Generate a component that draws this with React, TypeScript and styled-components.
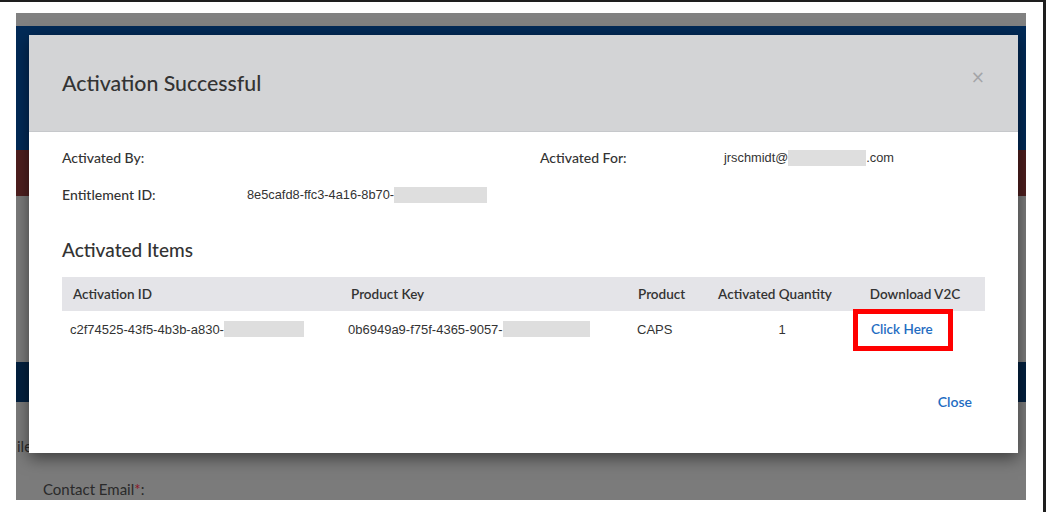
import React from "react";
import styled, { createGlobalStyle } from "styled-components";

const GlobalStyle = createGlobalStyle`
  html, body {
    margin: 0;
    padding: 0;
    background: #ffffff;
    width: 1046px;
    height: 512px;
    overflow: hidden;
  }
  body {
    font-family: "Source Sans Pro", Lato, "Noto Sans", sans-serif;
    color: #333;
  }
`;

const Frame = styled.div`
  width: 1046px;
  height: 512px;
  box-sizing: border-box;
  border-top: 2px solid #1e1e1e;
  border-right: 3px solid #1e1e1e;
  padding: 11px 17px 12px 16px;
`;

// the page behind the dialog, already dimmed by the backdrop
const Page = styled.div`
  position: relative;
  height: 487px;
  width: 1010px;
  overflow: hidden;
  background: #7b7b7b;
  display: flex;
  flex-direction: column;
`;

const Band = styled.div<{ $h: number; $bg: string }>`
  height: ${(p) => p.$h}px;
  flex: none;
  background: ${(p) => p.$bg};
`;

const Spacer = styled.div<{ $h: number }>`
  height: ${(p) => p.$h}px;
  flex: none;
`;

const PageText = styled.div<{ $left: number }>`
  margin-left: ${(p) => p.$left}px;
  font-family: "Source Sans Pro", Lato, sans-serif;
  font-size: 15px;
  color: #2a2a2a;
  line-height: 20px;
`;

const Req = styled.span`
  color: #8a1526;
`;

const Modal = styled.div`
  position: absolute;
  left: 13px;
  top: 22px;
  width: 989px;
  height: 418px;
  background: #fff;
  box-shadow: 0 5px 15px rgba(0, 0, 0, 0.5);
  display: flex;
  flex-direction: column;
`;

const Header = styled.div`
  height: 97px;
  box-sizing: border-box;
  background: #d3d4d6;
  border-bottom: 1px solid #c6c8cb;
  padding: 0 33px;
  display: flex;
  align-items: center;
  justify-content: space-between;
`;

const Title = styled.h4`
  margin: 0;
  font-size: 21.3px;
  font-weight: 500;
  color: #333;
`;

const CloseX = styled.button`
  background: none;
  border: none;
  padding: 0;
  margin-bottom: 11px;
  font-family: "DejaVu Sans", sans-serif;
  font-size: 17px;
  line-height: 1;
  color: #a4a5a8;
  cursor: pointer;
`;

const Body = styled.div`
  padding: 16px 33px 0;
  flex: 1;
`;

const InfoGrid = styled.div`
  display: grid;
  grid-template-columns: 185px 293px 184px 1fr;
  row-gap: 17px;
  line-height: 20px;
`;

const Label = styled.div`
  color: #333;
  font-size: 14px;
  font-weight: 500;
`;

const Value = styled.div`
  color: #333;
  font-family: "Liberation Sans", Arial, sans-serif;
  font-size: 12.8px;
  display: flex;
  align-items: center;
`;

const Redact = styled.span<{ $w: number }>`
  display: inline-block;
  width: ${(p) => p.$w}px;
  height: 16px;
  background: #dedede;
`;

const SectionTitle = styled.h5`
  margin: 33px 0 15px;
  font-size: 19px;
  font-weight: 500;
  line-height: 24px;
  color: #333;
`;

const Table = styled.table`
  width: 923px;
  border-collapse: collapse;
  table-layout: fixed;
`;

const Th = styled.th<{ $w: number; $align?: string; $pl?: number }>`
  box-sizing: border-box;
  width: ${(p) => p.$w}px;
  height: 34px;
  padding: 0 11px 0 ${(p) => p.$pl ?? 11}px;
  background: #e4e4e8;
  text-align: ${(p) => p.$align || "left"};
  font-size: 13.5px;
  font-weight: 600;
  color: #333;
  white-space: nowrap;
`;

const Td = styled.td<{ $align?: string; $pl?: number }>`
  box-sizing: border-box;
  height: 36px;
  padding: 0 8px 0 ${(p) => p.$pl ?? 8}px;
  text-align: ${(p) => p.$align || "left"};
  font-size: 13px;
  color: #333;
  font-family: "Liberation Sans", Arial, sans-serif;
  white-space: nowrap;
`;

const CellFlex = styled.div`
  display: flex;
  align-items: center;
`;

const DownloadLink = styled.a`
  position: relative;
  margin-left: 18px;
  font-family: "Source Sans Pro", Lato, sans-serif;
  font-size: 13.5px;
  font-weight: 600;
  color: #1f6dc2;
  text-decoration: none;

  /* red highlight drawn over the screenshot */
  &::after {
    content: "";
    position: absolute;
    left: -18px;
    right: -20px;
    top: -12px;
    bottom: -14px;
    border: 5px solid #ff0000;
  }
`;

const Footer = styled.div`
  display: flex;
  justify-content: flex-end;
  padding: 0 46px 35px;
`;

const CloseButton = styled.button`
  background: none;
  border: none;
  padding: 0;
  height: 34px;
  font-family: "Source Sans Pro", Lato, sans-serif;
  font-size: 14px;
  font-weight: 600;
  color: #1f6dc2;
  cursor: pointer;
`;

export default function App() {
  return (
    <>
      <GlobalStyle />
      <Frame>
        <Page>
          <Band $h={13} $bg="#818181" />
          <Band $h={124} $bg="#022a57" />
          <Band $h={46} $bg="#4e1f1f" />
          <Band $h={166} $bg="#7b7b7b" />
          <Band $h={40} $bg="#03203f" />
          <Spacer $h={34} />
          <PageText $left={1}>ile</PageText>
          <Spacer $h={23} />
          <PageText $left={27}>
            Contact Email<Req>*</Req>:
          </PageText>

          <Modal>
            <Header>
              <Title>Activation Successful</Title>
              <CloseX aria-label="Close">×</CloseX>
            </Header>
            <Body>
              <InfoGrid>
                <Label>Activated By:</Label>
                <Value />
                <Label>Activated For:</Label>
                <Value>
                  jrschmidt@
                  <Redact $w={78} />
                  .com
                </Value>
                <Label>Entitlement ID:</Label>
                <Value>
                  8e5cafd8-ffc3-4a16-8b70-
                  <Redact $w={93} />
                </Value>
              </InfoGrid>

              <SectionTitle>Activated Items</SectionTitle>

              <Table>
                <thead>
                  <tr>
                    <Th $w={278}>Activation ID</Th>
                    <Th $w={285}>Product Key</Th>
                    <Th $w={80} $pl={13}>
                      Product
                    </Th>
                    <Th $w={140} $align="center">
                      Activated Quantity
                    </Th>
                    <Th $w={140} $align="center">
                      Download V2C
                    </Th>
                  </tr>
                </thead>
                <tbody>
                  <tr>
                    <Td>
                      <CellFlex>
                        c2f74525-43f5-4b3b-a830-
                        <Redact $w={80} />
                      </CellFlex>
                    </Td>
                    <Td>
                      <CellFlex>
                        0b6949a9-f75f-4365-9057-
                        <Redact $w={87} />
                      </CellFlex>
                    </Td>
                    <Td $pl={12}>CAPS</Td>
                    <Td $align="center" $pl={22}>
                      1
                    </Td>
                    <Td>
                      <DownloadLink href="#">Click Here</DownloadLink>
                    </Td>
                  </tr>
                </tbody>
              </Table>
            </Body>
            <Footer>
              <CloseButton>Close</CloseButton>
            </Footer>
          </Modal>
        </Page>
      </Frame>
    </>
  );
}
